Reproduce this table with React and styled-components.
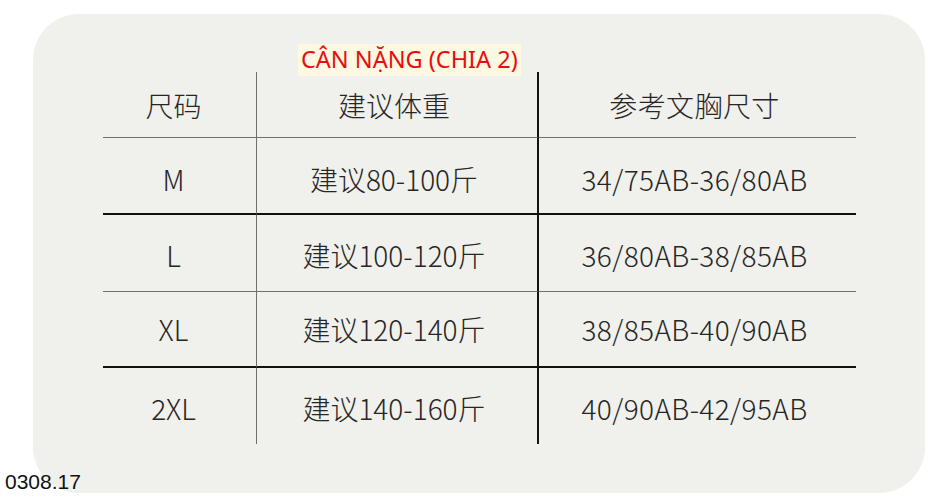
import styled, { createGlobalStyle } from 'styled-components';

const GlobalStyle = createGlobalStyle`
  html, body {
    margin: 0;
    padding: 0;
    background: #ffffff;
  }
`;

const Page = styled.div`
  position: relative;
  width: 933px;
  height: 501px;
  padding: 14px 0 0 33px;
  box-sizing: border-box;
  overflow: hidden;
`;

const Card = styled.div`
  width: 892px;
  height: 479px;
  box-sizing: border-box;
  padding: 30px 0 0 70px;
  background: #f0f0ec;
  border-radius: 46px;
`;

const Label = styled.div`
  display: inline-block;
  margin: 0 0 -5px 195px;
  padding: 1px 3px 3px;
  background: #fdf8e2;
  color: #e40f0f;
  font-family: 'Noto Sans', 'Open Sans', sans-serif;
  font-size: 23.5px;
  line-height: 28px;
  position: relative;
  z-index: 1;
`;

const Table = styled.div`
  display: grid;
  grid-template-columns: 154px 282px 317px;
  width: 753px;
`;

const Cell = styled.div`
  display: flex;
  align-items: center;
  justify-content: center;
  height: ${(p) => p.$h}px;
  box-sizing: border-box;
  padding-top: ${(p) => p.$shift}px;
  padding-right: ${(p) => (p.$col === 0 ? 12 : 6)}px;
  font-family: 'Noto Sans CJK SC', 'Noto Sans', sans-serif;
  font-weight: 300;
  font-size: 28px;
  color: #262626;
  letter-spacing: ${(p) => (p.$col === 2 ? 0.4 : 0)}px;
  border-bottom: ${(p) =>
    p.$line === 'thin' ? '1px solid #707070' : p.$line === 'thick' ? '2px solid #111' : 'none'};
  border-right: ${(p) =>
    p.$col === 0 ? '1px solid #6e6e6e' : p.$col === 1 ? '2px solid #141414' : 'none'};
`;

const Stamp = styled.div`
  position: absolute;
  left: 5px;
  top: 470px;
  font-family: 'Liberation Sans', Arial, sans-serif;
  font-size: 21px;
  line-height: 24px;
  color: #111;
`;

const rows = [
  { h: 66, shift: 0, line: 'thin', cells: ['尺码', '建议体重', '参考文胸尺寸'] },
  { h: 77, shift: 7, line: 'thick', cells: ['M', '建议80-100斤', '34/75AB-36/80AB'] },
  { h: 77, shift: 4, line: 'thin', cells: ['L', '建议100-120斤', '36/80AB-38/85AB'] },
  { h: 76, shift: 0, line: 'thick', cells: ['XL', '建议120-140斤', '38/85AB-40/90AB'] },
  { h: 76, shift: 3, line: 'none', cells: ['2XL', '建议140-160斤', '40/90AB-42/95AB'] },
];

export default function App() {
  return (
    <Page>
      <GlobalStyle />
      <Card>
        <Label>CÂN NẶNG (CHIA 2)</Label>
        <Table>
          {rows.map((row, r) =>
            row.cells.map((text, c) => (
              <Cell key={`${r}-${c}`} $h={row.h} $shift={row.shift} $line={row.line} $col={c}>
                {text}
              </Cell>
            ))
          )}
        </Table>
      </Card>
      <Stamp>0308.17</Stamp>
    </Page>
  );
}
